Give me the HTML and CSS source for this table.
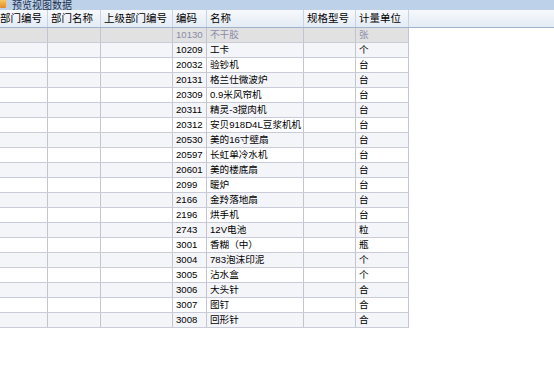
FILE: index.html
```html
<!DOCTYPE html>
<html lang="zh">
<head>
<meta charset="utf-8">
<link rel="stylesheet" href="styles.css">
</head>
<body>
<div class="titlebar">
  <span class="ticon"></span>
  <span class="ttext">预览视图数据</span>
</div>
<div class="grid">
  <div class="hrow">
    <div class="row head">
      <div class="c">部门编号</div><div class="c">部门名称</div><div class="c">上级部门编号</div><div class="c">编码</div><div class="c">名称</div><div class="c">规格型号</div><div class="c">计量单位</div>
    </div>
  </div>
  <div class="row sel"><div class="c"></div><div class="c"></div><div class="c"></div><div class="c">10130</div><div class="c">不干胶</div><div class="c"></div><div class="c">张</div></div>
  <div class="row alt"><div class="c"></div><div class="c"></div><div class="c"></div><div class="c">10209</div><div class="c">工卡</div><div class="c"></div><div class="c">个</div></div>
  <div class="row"><div class="c"></div><div class="c"></div><div class="c"></div><div class="c">20032</div><div class="c">验钞机</div><div class="c"></div><div class="c">台</div></div>
  <div class="row alt"><div class="c"></div><div class="c"></div><div class="c"></div><div class="c">20131</div><div class="c">格兰仕微波炉</div><div class="c"></div><div class="c">台</div></div>
  <div class="row"><div class="c"></div><div class="c"></div><div class="c"></div><div class="c">20309</div><div class="c">0.9米风帘机</div><div class="c"></div><div class="c">台</div></div>
  <div class="row alt"><div class="c"></div><div class="c"></div><div class="c"></div><div class="c">20311</div><div class="c">精灵-3搅肉机</div><div class="c"></div><div class="c">台</div></div>
  <div class="row"><div class="c"></div><div class="c"></div><div class="c"></div><div class="c">20312</div><div class="c">安贝918D4L豆浆机机</div><div class="c"></div><div class="c">台</div></div>
  <div class="row alt"><div class="c"></div><div class="c"></div><div class="c"></div><div class="c">20530</div><div class="c">美的16寸壁扇</div><div class="c"></div><div class="c">台</div></div>
  <div class="row"><div class="c"></div><div class="c"></div><div class="c"></div><div class="c">20597</div><div class="c">长虹单冷水机</div><div class="c"></div><div class="c">台</div></div>
  <div class="row alt"><div class="c"></div><div class="c"></div><div class="c"></div><div class="c">20601</div><div class="c">美的楼底扇</div><div class="c"></div><div class="c">台</div></div>
  <div class="row"><div class="c"></div><div class="c"></div><div class="c"></div><div class="c">2099</div><div class="c">暖炉</div><div class="c"></div><div class="c">台</div></div>
  <div class="row alt"><div class="c"></div><div class="c"></div><div class="c"></div><div class="c">2166</div><div class="c">金羚落地扇</div><div class="c"></div><div class="c">台</div></div>
  <div class="row"><div class="c"></div><div class="c"></div><div class="c"></div><div class="c">2196</div><div class="c">烘手机</div><div class="c"></div><div class="c">台</div></div>
  <div class="row alt"><div class="c"></div><div class="c"></div><div class="c"></div><div class="c">2743</div><div class="c">12V电池</div><div class="c"></div><div class="c">粒</div></div>
  <div class="row"><div class="c"></div><div class="c"></div><div class="c"></div><div class="c">3001</div><div class="c">香糊（中）</div><div class="c"></div><div class="c">瓶</div></div>
  <div class="row alt"><div class="c"></div><div class="c"></div><div class="c"></div><div class="c">3004</div><div class="c">783泡沫印泥</div><div class="c"></div><div class="c">个</div></div>
  <div class="row"><div class="c"></div><div class="c"></div><div class="c"></div><div class="c">3005</div><div class="c">沾水盒</div><div class="c"></div><div class="c">个</div></div>
  <div class="row alt"><div class="c"></div><div class="c"></div><div class="c"></div><div class="c">3006</div><div class="c">大头针</div><div class="c"></div><div class="c">合</div></div>
  <div class="row"><div class="c"></div><div class="c"></div><div class="c"></div><div class="c">3007</div><div class="c">图钉</div><div class="c"></div><div class="c">合</div></div>
  <div class="row alt"><div class="c"></div><div class="c"></div><div class="c"></div><div class="c">3008</div><div class="c">回形针</div><div class="c"></div><div class="c">合</div></div>
</div>
</body>
</html>
```

FILE: styles.css
```css
html, body {
  margin: 0;
  padding: 0;
  background: #ffffff;
  width: 554px;
  height: 379px;
  overflow: hidden;
}
body {
  font-family: "Liberation Sans", "Noto Sans CJK SC", sans-serif;
  font-size: 9.6px;
  color: #000;
}
.titlebar {
  height: 10px;
  background: #bdd2e9;
  overflow: hidden;
  display: flex;
  align-items: flex-end;
  gap: 6px;
}
.ticon {
  width: 6px;
  height: 8px;
  margin-bottom: 2px;
  background: linear-gradient(#f7c95a, #e0892a);
  border-radius: 1px;
  flex: none;
}
.ttext {
  font-size: 10px;
  line-height: 11px;
  margin-bottom: -1px;
  color: #1b2f4d;
}
.grid {
  width: 554px;
}
.hrow {
  height: 17px;
  background: linear-gradient(#f7f9fc, #e4ebf4);
  border-bottom: 1px solid #9fb3cb;
  overflow: hidden;
}
.row {
  display: grid;
  grid-template-columns: 51px 53px 72px 34px 97px 52px 53px;
  width: 412px;
  margin-left: -3px;
  height: 15px;
  box-sizing: border-box;
  border-bottom: 1px solid #c9ccd6;
}
.row .c {
  box-sizing: border-box;
  border-right: 1px solid #c2c5cf;
  padding-left: 3px;
  line-height: 14px;
  white-space: nowrap;
  overflow: hidden;
}
.row.head {
  height: 17px;
  border-bottom: 0;
}
.row.head .c {
  line-height: 17px;
  font-size: 10.5px;
  border-right: 1px solid #c6d3e3;
}
.row.alt {
  background: #f4f5f9;
}
.row.sel {
  background: #e1e1e1;
  color: #8b8ba6;
}
```
